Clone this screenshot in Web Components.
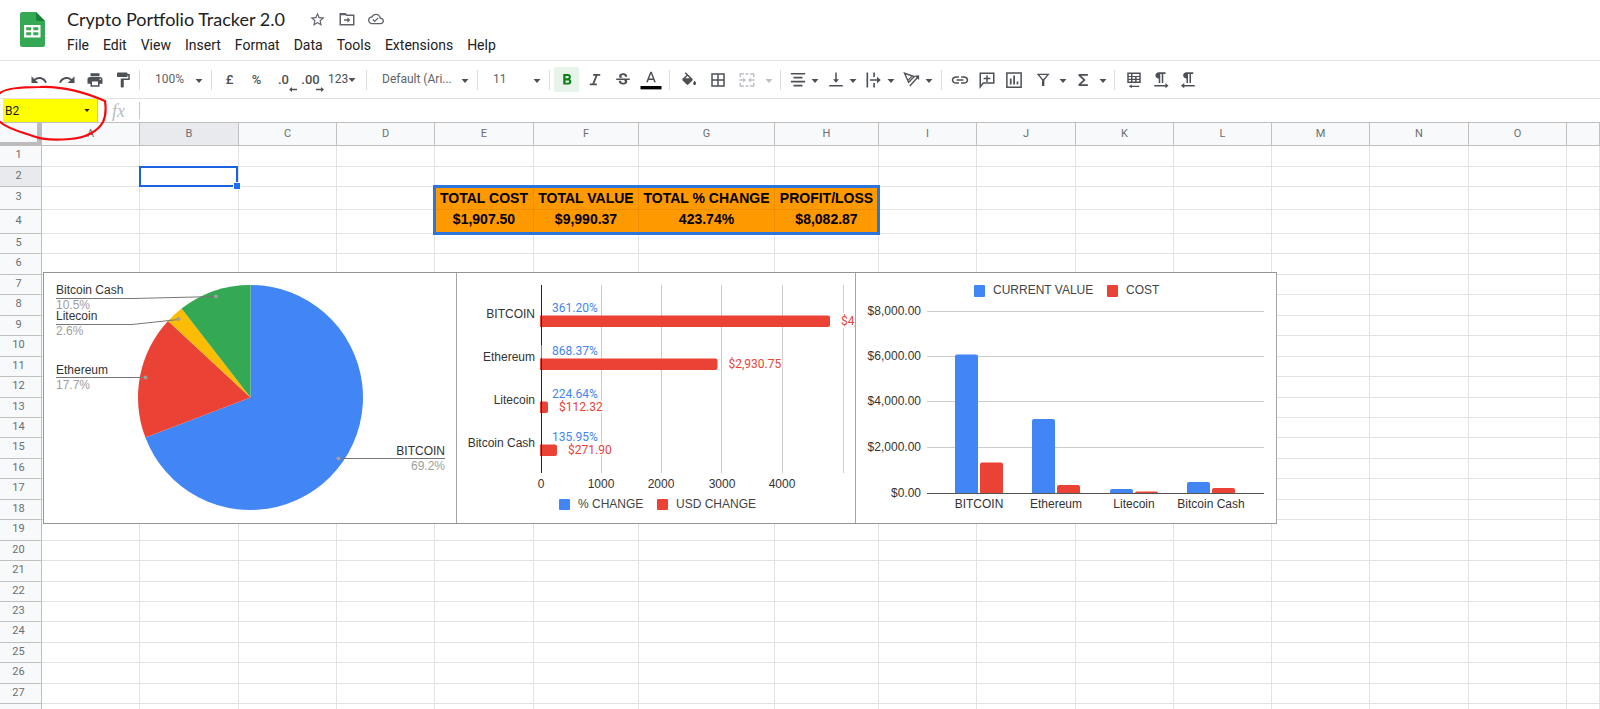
<!DOCTYPE html>
<html lang="en">
<head>
<meta charset="utf-8">
<title>Crypto Portfolio Tracker 2.0</title>
<style>
  html, body { margin: 0; height: 100%; overflow: hidden; background: #fff; }
  body { font-family: Roboto, sans-serif; color: #202124; }
</style>
</head>
<body>
<sheet-app>
  <doc-header slot="header" doc-title="Crypto Portfolio Tracker 2.0"></doc-header>
  <tool-bar slot="toolbar"></tool-bar>
  <formula-bar slot="formula" cell="B2"></formula-bar>
  <sheet-grid>
    <pie-chart slot="charts"></pie-chart>
    <bar-chart slot="charts"></bar-chart>
    <column-chart slot="charts"></column-chart>
  </sheet-grid>
</sheet-app>

<script>
const ICONS = {
  undo: '<path d="M12.5 8c-2.65 0-5.05.99-6.9 2.6L2 7v9h9l-3.62-3.62c1.39-1.16 3.16-1.88 5.12-1.88 3.54 0 6.55 2.31 7.6 5.5l2.37-.78C21.08 11.03 17.15 8 12.5 8z"/>',
  redo: '<path d="M18.4 10.6C16.55 8.99 14.15 8 11.5 8c-4.65 0-8.58 3.03-9.96 7.22L3.9 16c1.05-3.19 4.05-5.5 7.6-5.5 1.95 0 3.73.72 5.12 1.88L13 16h9V7l-3.6 3.6z"/>',
  print: '<path d="M19 8H5c-1.66 0-3 1.34-3 3v6h4v4h12v-4h4v-6c0-1.66-1.34-3-3-3zm-3 11H8v-5h8v5zm3-7c-.55 0-1-.45-1-1s.45-1 1-1 1 .45 1 1-.45 1-1 1zm-1-9H6v4h12V3z"/>',
  paint: '<path d="M18 4V3c0-.55-.45-1-1-1H5c-.55 0-1 .45-1 1v4c0 .55.45 1 1 1h12c.55 0 1-.45 1-1V6h1v4H9v11c0 .55.45 1 1 1h2c.55 0 1-.45 1-1v-9h8V4h-3z"/>',
  bold: '<path d="M15.6 10.79c.97-.67 1.65-1.77 1.65-2.79 0-2.26-1.75-4-4-4H7v14h7.04c2.09 0 3.71-1.7 3.71-3.79 0-1.52-.86-2.82-2.15-3.42zM10 6.5h3c.83 0 1.5.67 1.5 1.5s-.67 1.5-1.5 1.5h-3v-3zm3.5 9H10v-3h3.5c.83 0 1.5.67 1.5 1.5s-.67 1.5-1.5 1.5z"/>',
  italic: '<path d="M9.5 4v2.2h3.200l-4.200 10.400H5V19h9.500v-2.200h-3.400l4.200-10.600H19V4z"/>',
  strike: '<path d="M7.24 8.75c-.26-.48-.39-1.03-.39-1.67 0-.61.13-1.16.4-1.67.26-.5.63-.93 1.11-1.29.48-.35 1.05-.63 1.7-.83.66-.19 1.39-.29 2.18-.29.81 0 1.54.11 2.21.34.66.22 1.23.54 1.69.94.47.4.83.88 1.08 1.43s.38 1.15.38 1.81h-3.01c0-.31-.05-.59-.15-.85-.09-.27-.24-.49-.44-.68-.2-.19-.45-.33-.75-.44-.3-.1-.66-.16-1.06-.16-.39 0-.74.04-1.03.13s-.53.21-.72.36c-.19.16-.34.34-.44.55-.1.21-.15.43-.15.66 0 .48.25.88.74 1.21.38.25.77.48 1.41.7H7.39c-.05-.08-.11-.17-.15-.25zM21 12v-2H3v2h9.62c.18.07.4.14.55.2.37.17.66.34.87.51s.35.36.43.57c.07.2.11.43.11.69 0 .23-.05.45-.14.66-.09.2-.23.38-.42.53-.19.15-.42.26-.71.35-.29.08-.63.13-1.01.13-.43 0-.83-.04-1.18-.13s-.66-.23-.91-.42c-.25-.19-.45-.44-.59-.75s-.25-.76-.25-1.21H6.4c0 .55.08 1.13.24 1.58s.37.85.65 1.21c.28.35.6.66.98.92.37.26.78.48 1.22.65.44.17.9.3 1.38.39.48.08.96.13 1.44.13.8 0 1.53-.09 2.18-.28s1.21-.45 1.67-.79c.46-.34.82-.77 1.07-1.27s.38-1.07.38-1.71c0-.6-.1-1.14-.31-1.61-.05-.11-.11-.23-.17-.33H21z"/>',
  textcolor: '<path d="M11 1L5.5 15h2.250l1.120-3h6.250l1.120 3h2.250L13 1h-2zm-1.380 9L12 3.670 14.380 10H9.620z"/><path fill="#000" d="M-2 20h28v4.500H-2z"/>',
  fill: '<path d="M16.560 10.440L7.620 1.500 6.210 2.910l2.380 2.380-5.150 5.150c-.59.59-.59 1.540 0 2.120l5.500 5.500c.29.29.68.44 1.060.44s.77-.15 1.060-.44l5.500-5.500c.59-.58.59-1.530 0-2.120zM10 6.700l3 3H7zM19.500 13s-2 2.170-2 3.500c0 1.100.9 2 2 2s2-.9 2-2c0-1.330-2-3.500-2-3.500z"/>',
  borders: '<path d="M3 3v18h18V3H3zm8 16H5v-6h6v6zm0-8H5V5h6v6zm8 8h-6v-6h6v6zm0-8h-6V5h6v6z"/>',
  merge: '<path d="M2 3h6v2H4v3H2zM10 3h4v2h-4zM16 3h6v5h-2V5h-4zM2 16h2v3h4v2H2zM10 19h4v2h-4zM20 16h2v5h-6v-2h4zM2 11h5V8.500l3.500 3.500L7 15.500V13H2zM22 11h-5V8.500L13.500 12l3.500 3.500V13h5z"/>',
  align: '<path d="M6 15v2h12v-2H6zm-3 6h18v-2H3v2zm3-10v2h12v-2H6zm0-4v2h12V7H6zM3 3v2h18V3H3z" fill="none"/><path d="M2.500 2.500h19v2.200h-19zM6 7.700h12v2.200H6zM2.500 13h19v2.200h-19zM6 18.300h12v2.200H6z"/>',
  valign: '<path d="M16 11h-3V2h-2v9H8l4 4.500 4-4.500zM3 18.500v2.200h18v-2.200H3z"/>',
  wrap: '<path d="M2 2h2.200v20H2zM11 2h2.200v6H11zM11 16h2.200v6H11zM6.500 11H16V7.500l5 4.500-5 4.500V13H6.500z"/>',
  rotate: '<path fill="none" stroke="currentColor" stroke-width="1.800" d="M2 3l13 4.500L7.500 15zM12.500 6.500L6.500 12.500M9 20L20 8"/><path d="M21.500 5.500v6.500l-6.200-5.800z"/>',
  link: '<path d="M3.100 12c0-1.710 1.390-3.100 3.900-3.100h3.500V7H7c-3.500 0-6 2.240-6 5s2.500 5 6 5h3.500v-1.900H7c-2.500 0-3.900-1.390-3.900-3.100zM7.500 13h9v-2h-9v2zM17 7h-3.500v1.900H17c2.500 0 3.900 1.390 3.900 3.100s-1.390 3.100-3.900 3.100h-3.500V17H17c3.500 0 6-2.240 6-5s-2.500-5-6-5z"/>',
  comment: '<path fill="none" stroke="currentColor" stroke-width="2" d="M3 21V3h18v13H7z"/><path d="M11 5.500h2V9h3.500v2H13v3.500h-2V11H7.500V9H11z"/>',
  chart: '<path fill="none" stroke="currentColor" stroke-width="2" d="M2.500 2.500h19v19h-19z"/><path d="M6.500 10h2.300v8H6.500zM11 6h2.300v12H11zM15.500 14h2.300v4h-2.300z"/>',
  filter: '<path fill="none" stroke="currentColor" stroke-width="1.800" d="M5.500 4.500h13.500L12.250 12.500z"/><path d="M10.700 11h3.100v9h-3.100z"/>',
  sigma: '<path d="M18.500 4H6v2.200l6.200 5.800L6 17.800V20h12.500v-2.300h-9l6-5.700-6-5.700h9z"/>',
  sheetdir: '<path fill-rule="evenodd" d="M3 2h18v14H3zM5 4v2.500h3V4zM10 4v2.500h9V4zM5 8v2.200h3V8zM10 8v2.200h3.500V8zM15.500 8v2.200H19V8zM5 12v2h3v-2zM10 12v2h3.500v-2zM15.500 12v2H19v-2z"/><path d="M9 18v1.500h10v1.800H9V23l-4-2.600z"/>',
  ltr: '<path d="M9 10v6h2V4h2v12h2V4h3V1.500H9C6.500 1.500 4.500 3.400 4.500 5.800S6.500 10 9 10zm13 9.500l-4-3.500v2.500H3v2h15V23l4-3.500z"/>',
  rtl: '<path d="M10 10v6h2V4h2v12h2V4h3V1.500h-9C7.500 1.500 5.500 3.400 5.500 5.800S7.500 10 10 10zM7 18.500V16l-4.500 3.500L7 23v-2.500h14v-2H7z"/>',
  star: '<path d="M22 9.24l-7.19-.62L12 2 9.19 8.63 2 9.24l5.46 4.73L5.82 21 12 17.27 18.18 21l-1.63-7.03L22 9.24zM12 15.4l-3.76 2.27 1-4.28-3.32-2.88 4.38-.38L12 6.1l1.71 4.04 4.38.38-3.32 2.88 1 4.28L12 15.4z"/>',
  move: '<path fill="none" stroke="currentColor" stroke-width="2" d="M3 5h6.500l2 2H21v12.500H3z"/><path d="M3 4h7l2 3H3z"/><path d="M8 12.200h4.500V9.500l4 3.700-4 3.700v-2.700H8z"/>',
  cloud: '<path d="M19.35 10.04C18.67 6.59 15.64 4 12 4 9.11 4 6.6 5.64 5.35 8.04 2.34 8.36 0 10.91 0 14c0 3.31 2.69 6 6 6h13c2.76 0 5-2.24 5-5 0-2.64-2.05-4.78-4.65-4.96zM19 18H6c-2.21 0-4-1.79-4-4 0-2.05 1.53-3.76 3.56-3.97l1.07-.11.5-.95C8.08 7.14 9.94 6 12 6c2.62 0 4.88 1.86 5.39 4.43l.3 1.5 1.53.11c1.56.1 2.78 1.41 2.78 2.96 0 1.65-1.35 3-3 3zm-9-3.82l-2.09-2.09L6.5 13.500 10 17l6.010-6.010-1.410-1.410z"/>'
};
ICONS.align = '<path d="M2.500 2.500h19v2.200h-19zM6 7.700h12v2.200H6zM2.500 13h19v2.200h-19zM6 18.300h12v2.200H6z"/>';
const svgIcon = (name, size = 18) =>
  `<svg viewBox="0 0 24 24" width="${size}" height="${size}" fill="currentColor" overflow="visible" aria-hidden="true">${ICONS[name]}</svg>`;
const CARET = '<svg class="caret" viewBox="0 0 8 4" width="8" height="4" aria-hidden="true"><path fill="currentColor" d="M.5 0h7L4 4z"/></svg>';

class ShadowElement extends HTMLElement {
  connectedCallback() {
    if (this.shadowRoot) return;
    const template = document.createElement('template');
    template.innerHTML = this.render();
    this.attachShadow({ mode: 'open' }).append(template.content);
  }
}

/* Page frame: three bars above the grid, with the hand-drawn ring on top. */
customElements.define('sheet-app', class extends ShadowElement {
  render() {
    return `<style>
      :host { display: flex; flex-direction: column; height: 100vh; position: relative; overflow: hidden; }
      .ring { position: absolute; left: 0; top: 80px; pointer-events: none; }
    </style>
    <slot name="header"></slot><slot name="toolbar"></slot><slot name="formula"></slot><slot></slot>
    <svg class="ring" width="120" height="64" viewBox="0 80 120 64" fill="none" stroke="#f60b0f" stroke-width="2.200" stroke-linejoin="round" aria-hidden="true">
      <path d="M-1 94C3 89 20 87 40 87C62 86 84 92 105 101C106 108 106 116 103 122C98 131 86 138 70 139C56 140 44 140 36 137C26 133 8 130 -1 121"/>
    </svg>`;
  }
});

customElements.define('doc-header', class extends ShadowElement {
  render() {
    const menus = ['File', 'Edit', 'View', 'Insert', 'Format', 'Data', 'Tools', 'Extensions', 'Help'];
    return `<style>
      :host { display: flex; box-sizing: border-box; height: 61px; border-bottom: 1px solid #e1e2e4; flex: none; }
      .logo { margin: 12px 15px 0 20px; flex: none; }
      .rows { display: flex; flex-direction: column; padding-top: 7px; gap: 1px; }
      .line { display: flex; align-items: center; height: 24px; padding-left: 7px; }
      h1 { margin: 0 24px 0 0; font: 400 18px/24px Lato, sans-serif; color: #202124; white-space: nowrap; }
      button { border: 0; background: none; padding: 0; color: #5f6368; }
      .line button { display: grid; place-items: center; width: 18px; height: 24px; margin-right: 11px; }
      nav { display: flex; height: 26px; align-items: center; }
      nav button { padding: 0 7px; font: 400 14px/26px Roboto, sans-serif; color: #202124; }
    </style>
    <svg class="logo" width="25" height="35" viewBox="0 0 25 35" aria-hidden="true">
      <path fill="#34a853" d="M2.500 0H16l9 9v23.500a2.500 2.500 0 0 1-2.500 2.500h-20A2.500 2.500 0 0 1 0 32.500v-30A2.500 2.500 0 0 1 2.500 0z"/>
      <path fill="#188038" d="M16 0l9 9h-7a2 2 0 0 1-2-2z"/>
      <path fill="#fff" fill-rule="evenodd" d="M4 13h16.500v12.500H4zM6.200 15.200v3h5v-3zM13.300 15.200v3h5v-3zM6.200 20.300v3h5v-3zM13.300 20.300v3h5v-3z"/>
    </svg>
    <div class="rows">
      <div class="line"><h1>${this.getAttribute('doc-title')}</h1>
        <button aria-label="Star">${svgIcon('star', 17)}</button>
        <button aria-label="Move">${svgIcon('move')}</button>
        <button aria-label="Saved to Drive">${svgIcon('cloud', 16)}</button>
      </div>
      <nav>${menus.map(m => `<button>${m}</button>`).join('')}</nav>
    </div>`;
  }
});

customElements.define('tool-button', class extends ShadowElement {
  render() {
    return `<style>
      :host { display: block; flex: none; width: 27px; color: #4d5156; }
      :host([wide]) { width: 28px; }
      :host([active]) { color: #0b8014; }
      :host([disabled]) { color: #bdc1c6; }
      button { position: relative; box-sizing: border-box; display: flex; align-items: center; justify-content: center; width: 100%; height: 25px; border: 0; padding: 0; background: none; color: inherit; font: 500 13px/25px Roboto, sans-serif; }
      :host([active]) button { width: 25px; margin: 0 1px; border-radius: 2px; background: #e6f4ea; }
      ::slotted(svg) { display: block; }
    </style>
    <button aria-label="${this.getAttribute('label')}">${this.hasAttribute('icon') ? svgIcon(this.getAttribute('icon')) : '<slot></slot>'}</button>`;
  }
});

customElements.define('caret-button', class extends ShadowElement {
  render() {
    return `<style>
      :host { display: block; flex: none; width: 8px; color: #4d5156; }
      :host([disabled]) { color: #bdc1c6; }
      button { display: grid; place-items: center; width: 100%; height: 25px; border: 0; padding: 2px 0 0; background: none; color: inherit; }
      svg { display: block; }
    </style><button aria-label="${this.getAttribute('label')} options">${CARET}</button>`;
  }
});

customElements.define('drop-down', class extends ShadowElement {
  render() {
    return `<style>
      :host { display: block; position: relative; flex: none; width: 67px; color: #4d5156; }
      :host([wide]) { width: 106px; }
      select { appearance: none; width: 100%; height: 25px; border: 0; margin: 0; padding: 0 20px 0 13px; background: none; color: #5f6368; font: 400 12px/25px Roboto, sans-serif; }
      .caret { position: absolute; right: 6px; top: 12px; pointer-events: none; }
    </style><select aria-label="${this.getAttribute('label')}"><option>${this.getAttribute('value')}</option></select>${CARET}`;
  }
});

customElements.define('tool-bar', class extends ShadowElement {
  render() {
    const b = (icon, label, extra = '') => `<tool-button icon="${icon}" label="${label}" ${extra}></tool-button>`;
    const pair = (icon, label) => `<span class="pair">${b(icon, label)}<caret-button label="${label}"></caret-button></span>`;
    const arrow = d => `<svg class="sub" width="8" height="5" viewBox="0 0 8 5" aria-hidden="true"><path fill="currentColor" d="${d}"/></svg>`;
    return `<style>
      :host { display: flex; align-items: center; box-sizing: border-box; height: 38px; padding-left: 25px; border-bottom: 1px solid #e1e2e4; flex: none; overflow: hidden; color: #4d5156; }
      .group, .pair { display: flex; align-items: center; flex: none; }
      .sep { flex: none; width: 1px; height: 20px; margin: 0 2px; background: #dadce0; }
      .numbers { padding-left: 2px; }
      .number-menu { width: 40px; display: flex; align-items: center; height: 25px; border: 0; padding: 0 0 0 4px; background: none; color: #4d5156; font: 400 12px/25px Roboto, sans-serif; }
      .sub { position: absolute; right: 0; bottom: 0; }
      .style { padding: 0 2px 0 1px; }
      .cells { gap: 1px; padding: 0 5px 0 3px; }
      .cells caret-button { margin-left: 3px; }
      .pair { gap: 0; }
      .text { gap: 3px; padding: 0 6px 0 1px; }
      .insert { padding: 0 5px 0 2px; }
      .insert .pair { gap: 3px; padding-left: 2px; }
      .direction { padding-left: 3px; }
    </style>
    <div class="group">${b('undo', 'Undo', 'wide')}${b('redo', 'Redo', 'wide')}${b('print', 'Print', 'wide')}${b('paint', 'Paint format', 'wide')}</div>
    <i class="sep"></i>
    <drop-down label="Zoom" value="100%"></drop-down>
    <i class="sep"></i>
    <div class="group numbers">
      <tool-button label="Format as currency">£</tool-button>
      <tool-button label="Format as percent">%</tool-button>
      <tool-button label="Decrease decimal places">.0${arrow('M0 2.500L3 0v1.800h5v1.400H3V5z')}</tool-button>
      <tool-button label="Increase decimal places">.00${arrow('M8 2.500L5 0v1.800H0v1.400h5V5z')}</tool-button>
      <button class="number-menu" aria-label="More formats">123${CARET}</button>
    </div>
    <i class="sep"></i>
    <drop-down wide label="Font" value="Default (Ari..."></drop-down>
    <i class="sep"></i>
    <drop-down label="Font size" value="11"></drop-down>
    <i class="sep"></i>
    <div class="group style">${b('bold', 'Bold', 'active wide')}${b('italic', 'Italic', 'wide')}${b('strike', 'Strikethrough', 'wide')}${b('textcolor', 'Text colour', 'wide')}</div>
    <i class="sep"></i>
    <div class="group cells">${b('fill', 'Fill colour', 'wide')}${b('borders', 'Borders', 'wide')}${b('merge', 'Merge cells', 'wide disabled')}<caret-button disabled label="Merge"></caret-button></div>
    <i class="sep"></i>
    <div class="group text">${pair('align', 'Horizontal align')}${pair('valign', 'Vertical align')}${pair('wrap', 'Text wrapping')}${pair('rotate', 'Text rotation')}</div>
    <i class="sep"></i>
    <div class="group insert">${b('link', 'Insert link')}${b('comment', 'Insert comment')}${b('chart', 'Insert chart')}${pair('filter', 'Filter')}${pair('sigma', 'Functions')}</div>
    <i class="sep"></i>
    <div class="group direction">${b('sheetdir', 'Sheet direction')}${b('ltr', 'Left to right')}${b('rtl', 'Right to left')}</div>`;
  }
});

customElements.define('formula-bar', class extends ShadowElement {
  render() {
    return `<style>
      :host { display: flex; align-items: center; height: 23px; flex: none; color: #202124; }
      .name { display: flex; align-items: center; box-sizing: border-box; width: 95px; height: 23px; margin-left: 3px; padding-right: 7px; background: #ff0; border-right: 1px solid #d5d52a; }
      input { flex: 1; min-width: 0; box-sizing: border-box; border: 0; padding: 0 2px; background: none; color: #202124; font: 400 12px/22px Roboto, sans-serif; outline: 0; }
      .name svg { width: 6px; height: 3px; }
      .fx { width: 41px; box-sizing: border-box; padding-left: 14px; font: italic 400 18px/20px "Liberation Serif", serif; color: #b8bbbf; }
      .rule { width: 1px; height: 17px; background: #c6c8ca; }
    </style>
    <div class="name"><input aria-label="Name box" value="${this.getAttribute('cell')}">${CARET}</div>
    <span class="fx">fx</span><i class="rule"></i>
    <input aria-label="Formula">`;
  }
});

customElements.define('sheet-grid', class extends ShadowElement {
  render() {
    const widths = [98, 99, 98, 98, 99, 105, 136, 104, 98, 99, 98, 98, 98, 99, 98];
    const heights = [21, 20, 23, 24, 20, 21, 20, 21, 20, 21, 20, 21, 20, 20, 21, 20, 21, 20, 21, 20, 21, 20, 20, 21, 20, 21, 20, 20];
    const values = {
      E3: 'TOTAL COST', F3: 'TOTAL VALUE', G3: 'TOTAL % CHANGE', H3: 'PROFIT/LOSS',
      E4: '$1,907.50', F4: '$9,990.37', G4: '423.74%', H4: '$8,082.87'
    };
    const letters = [...'ABCDEFGHIJKLMNO', ''];
    const head = letters.map(l => `<th scope="col"${l === 'B' ? ' class="on"' : ''}>${l}</th>`).join('');
    const body = heights.map((h, i) => {
      const n = i + 1;
      const cells = letters.map(l => {
        const v = l && values[l + n];
        return v ? `<td class="total${n === 4 ? ' sum' : ''}">${v}</td>` : '<td></td>';
      }).join('');
      return `<tr style="height:${h}px"><th scope="row"${n === 2 ? ' class="on"' : ''}>${n < 28 ? n : ''}</th>${cells}</tr>`;
    }).join('');
    return `<style>
      :host { display: block; position: relative; flex: 1; min-height: 0; overflow: hidden; }
      table { table-layout: fixed; width: 100%; border-collapse: separate; border-spacing: 0; }
      th, td { box-sizing: border-box; padding: 0; border: 0 solid #e2e3e3; border-width: 0 1px 1px 0; overflow: hidden; white-space: nowrap; text-align: center; }
      th { background: #f8f9fa; border-color: #c0c0c0; color: #6b6e72; font: 400 11px/16px Roboto, sans-serif; }
      thead tr { height: 24px; }
      thead th { border-top-width: 1px; }
      tbody th { padding: 0 4px 2px 0; }
      th.on { background: #e8eaed; }
      thead .corner { border: solid #bcbcbc; border-width: 1px 5px 4px 0; border-top-color: #c0c0c0; }
      .total { background: #f90; border-color: #ee8f00; color: #000; font: 700 14px/18px "Liberation Sans", Arial, sans-serif; }
      .sum { vertical-align: top; }
      .range, .cursor, .charts { position: absolute; box-sizing: border-box; }
      .range { left: 433px; top: 63px; width: 447px; height: 50px; border: 3px solid #2b76dd; }
      .cursor { left: 139px; top: 44px; width: 99px; height: 21px; border: 2px solid #1a63e0; }
      .cursor::after { content: ""; position: absolute; right: -5px; bottom: -5px; width: 6px; height: 6px; background: #1a73e8; border: 1px solid #fff; }
      .charts { display: flex; left: 43px; top: 150px; height: 252px; border: 1px solid #959595; border-right: 0; background: #fff; }
    </style>
    <table>
      <colgroup><col style="width:42px">${widths.map(w => `<col style="width:${w}px">`).join('')}<col></colgroup>
      <thead><tr><th class="corner" aria-label="Select all"></th>${head}</tr></thead>
      <tbody>${body}</tbody>
    </table>
    <div class="range"></div><div class="cursor"></div>
    <div class="charts"><slot name="charts"></slot></div>`;
  }
});

const CHART_CSS = `
  :host { display: block; height: 250px; border-right: 1px solid #a5a5a5; }
  svg { display: block; }
  text { font: 400 12px "Liberation Sans", Arial, sans-serif; fill: #333; }
  .end { text-anchor: end; } .mid { text-anchor: middle; }
  .grid { stroke: #ccc; } .axis { stroke: #333; }
  .blue { fill: #4285f4; } .red { fill: #ea4335; }`;

customElements.define('pie-chart', class extends ShadowElement {
  render() {
    const cx = 206.5, cy = 124.5, r = 112.5;
    const slices = [[69.2, '#4285f4'], [17.7, '#ea4335'], [2.6, '#fbbc04'], [10.5, '#34a853']];
    let at = 0;
    const point = p => {
      const a = p / 100 * 2 * Math.PI;
      return `${(cx + r * Math.sin(a)).toFixed(2)} ${(cy - r * Math.cos(a)).toFixed(2)}`;
    };
    const paths = slices.map(([share, color]) => {
      const from = at; at += share;
      return `<path fill="${color}" d="M${cx} ${cy}L${point(from)}A${r} ${r} 0 ${share > 50 ? 1 : 0} 1 ${point(at)}z"/>`;
    }).join('');
    return `<style>${CHART_CSS}
      .share { fill: #9e9e9e; } polyline { fill: none; stroke: #777; } circle { fill: #9e9e9e; }
    </style>
    <svg width="412" height="250" role="img" aria-label="Portfolio share by coin">${paths}
      <polyline points="12,25.500 89,25.500 172,23.500"/><circle cx="172" cy="23.500" r="2"/>
      <polyline points="12,51.500 88,51.500 134.500,46.500"/><circle cx="134.500" cy="46" r="2"/>
      <polyline points="12,104.500 101,104.500"/><circle cx="101.500" cy="104.500" r="2"/>
      <polyline points="295,185.500 401,185.500"/><circle cx="294.500" cy="185.500" r="2"/>
      <text x="12" y="21">Bitcoin Cash</text><text class="share" x="12" y="36">10.5%</text>
      <text x="12" y="47">Litecoin</text><text class="share" x="12" y="62">2.6%</text>
      <text x="12" y="101">Ethereum</text><text class="share" x="12" y="116">17.7%</text>
      <text class="end" x="401" y="182">BITCOIN</text><text class="end share" x="401" y="197">69.2%</text>
    </svg>`;
  }
});

customElements.define('bar-chart', class extends ShadowElement {
  render() {
    const rows = [
      ['BITCOIN', '361.20%', 289, '$4,'],
      ['Ethereum', '868.37%', 176.5, '$2,930.75'],
      ['Litecoin', '224.64%', 7, '$112.32'],
      ['Bitcoin Cash', '135.95%', 16, '$271.90']
    ];
    const ticks = [84, 144, 204, 265, 325];
    const bars = rows.map(([name, pct, w, usd], i) => {
      const y = 43 * i;
      return `<text class="end" x="78" y="${y + 45}">${name}</text>
        <path class="red" d="M83 ${y + 42.500}h${w - 1}q2 0 2 2v7.500q0 2-2 2h-${w - 1}z"/>
        <text class="val bluetext" x="95" y="${y + 39}">${pct}</text>
        <text class="val redtext" x="${84 + w + 11}" y="${y + 52}">${usd}</text>`;
    }).join('');
    return `<style>${CHART_CSS}
      .val { font-family: Roboto, sans-serif; stroke: #fff; stroke-width: 3; paint-order: stroke; }
      .bluetext { fill: #4285f4; } .redtext { fill: #ea4335; } .legend { fill: #444; } .axis { stroke: #222; }
    </style>
    <svg width="398" height="250" role="img" aria-label="Change by coin">
      ${[144, 204, 264, 325, 386].map(x => `<path class="grid" d="M${x}.5 12v188"/>`).join('')}
      ${bars}
      <path class="axis" d="M84.500 12v188"/><path class="blue" d="M84 72h1v13h-1z"/>
      ${ticks.map((x, i) => `<text class="mid" x="${x}" y="215">${i ? i * 1000 : 0}</text>`).join('')}
      <rect class="blue" x="102" y="226" width="11" height="11" rx="1"/><text class="legend" x="121" y="235">% CHANGE</text>
      <rect class="red" x="200" y="226" width="11" height="11" rx="1"/><text class="legend" x="219" y="235">USD CHANGE</text>
    </svg>`;
  }
});

customElements.define('column-chart', class extends ShadowElement {
  render() {
    const columns = [
      ['BITCOIN', 99, 81.5, 189.5], ['Ethereum', 176, 146, 212],
      ['Litecoin', 254, 216, 218.5], ['Bitcoin Cash', 331, 209, 215]
    ];
    const bar = (cls, x, top) => {
      const r = Math.min(2, 220 - top);
      return `<path class="${cls}" d="M${x} 220V${top + r}q0-${r} ${r}-${r}h${23 - 2 * r}q${r} 0 ${r} ${r}V220z"/>`;
    };
    return `<style>${CHART_CSS} .legend { fill: #444; } .axis { stroke: #555; }</style>
    <svg width="420" height="250" role="img" aria-label="Current value and cost by coin">
      ${['$8,000.00', '$6,000.00', '$4,000.00', '$2,000.00', '$0.00'].map((t, i) => {
        const y = [38, 83, 128, 174, 220][i];
        return `<path class="grid" d="M71 ${y}.5h337"/><text class="end" x="65" y="${y + 4}">${t}</text>`;
      }).join('')}
      ${columns.map(([name, x, value, cost]) => `${bar('blue', x, value)}${bar('red', x + 25, cost)}<text class="mid" x="${x + 24}" y="235">${name}</text>`).join('')}
      <path class="axis" d="M71 220.500h337"/>
      <rect class="blue" x="118" y="12" width="11" height="12" rx="1"/><text class="legend" x="137" y="21">CURRENT VALUE</text>
      <rect class="red" x="251" y="12" width="11" height="12" rx="1"/><text class="legend" x="270" y="21">COST</text>
    </svg>`;
  }
});
</script>
</body>
</html>
